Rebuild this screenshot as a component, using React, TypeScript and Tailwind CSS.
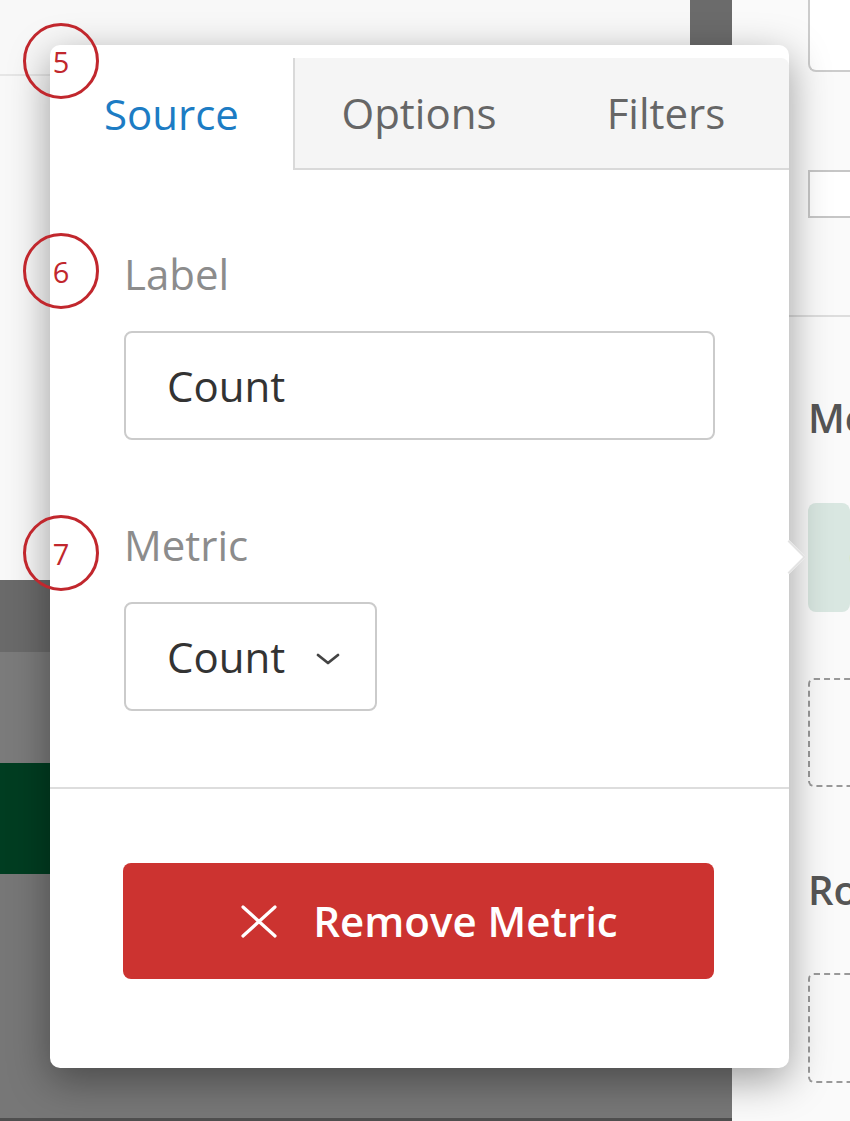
const FONT = "font-['Open_Sans','Noto_Sans',sans-serif]";

function Marker({ n, top }: { n: number; top: string }) {
  return (
    <div
      className={`absolute left-[23px] ${top} flex h-[76px] w-[76px] items-center justify-center rounded-full border-[3px] border-[#c1272d] text-[29px] leading-none text-[#c1272d]`}
    >
      {n}
    </div>
  );
}

function Background() {
  return (
    <div className="flex h-[1121px] w-[850px]">
      <div className="flex w-[732px] flex-col">
        <div className="h-[580px] bg-[#f8f8f8]">
          <div className="flex h-[76px] border-b-2 border-[#e6e6e6]">
            <div className="flex-1" />
            <div className="h-[45px] w-[42px] bg-[#6b6b6b]" />
          </div>
        </div>
        <div className="h-[72px] bg-[#6a6a6a]" />
        <div className="h-[111px] bg-[#7b7b7b]" />
        <div className="h-[111px] bg-[#003d21]" />
        <div className="flex-1 bg-[#777777]" />
        <div className="h-[3px] bg-[#4f4f4f]" />
      </div>

      <div className="flex flex-1 flex-col overflow-hidden bg-[#fafafa]">
        <div className="ml-[76px] h-[72px] rounded-bl-lg border-b-2 border-l-2 border-[#cccccc] bg-white" />
        <div className="ml-[76px] mt-[98px] h-[48px] border-2 border-r-0 border-[#c6c6c6] bg-white" />
        <div className="mt-[97px] border-t-2 border-[#dddddd]" />
        <div className="ml-[76px] mt-[73px] whitespace-nowrap text-[40px] font-semibold leading-[56px] text-[#555555]">
          Measures
        </div>
        <div className="ml-[76px] mt-[57px] flex h-[109px] items-center whitespace-nowrap rounded-lg bg-[#d9e7e1] pl-[40px] text-[38px] text-[#555]">
          Count
        </div>
        <div className="ml-[76px] mt-[66px] h-[109px] rounded-l-md border-2 border-r-0 border-dashed border-[#999999]" />
        <div className="ml-[76px] mt-[75px] whitespace-nowrap text-[40px] font-semibold leading-[56px] text-[#555555]">
          Rows
        </div>
        <div className="ml-[76px] mt-[55px] h-[110px] rounded-l-md border-2 border-r-0 border-dashed border-[#999999]" />
      </div>
    </div>
  );
}

function Tabs() {
  return (
    <div className="mt-[13px] flex h-[112px] text-[42px] leading-[56px]">
      <div className="flex w-[243px] items-center justify-center text-[#1c7cc4]">Source</div>
      <div className="flex w-[250px] items-center justify-center border-b-2 border-l-2 border-[#d9d9d9] bg-[#f5f5f5] text-[#666666]">
        Options
      </div>
      <div className="flex flex-1 items-center justify-center rounded-tr-lg border-b-2 border-[#d9d9d9] bg-[#f5f5f5] text-[#666666]">
        Filters
      </div>
    </div>
  );
}

function Popover() {
  return (
    <div className="absolute left-[50px] top-[45px] flex h-[1023px] w-[739px] flex-col rounded-[10px] bg-white shadow-[0_12px_40px_rgba(0,0,0,0.38)]">
      <div className="absolute left-[727px] top-[500px] h-[24px] w-[24px] rotate-45 border-r-2 border-t-2 border-[#e3e3e3] bg-white" />
      <Tabs />
      <div className="relative flex flex-col px-[74px] pt-[76px]">
        <div className="text-[42px] leading-[56px] text-[#8c8c8c]">Label</div>
        <div className="mt-[29px] flex h-[109px] items-center rounded-lg border-2 border-[#cbcbcb] pl-[41px] text-[42px] leading-[56px] text-[#333333]">
          Count
        </div>
        <div className="mt-[77px] text-[42px] leading-[56px] text-[#8c8c8c]">Metric</div>
        <div className="mt-[29px] flex h-[109px] w-[253px] items-center rounded-lg border-2 border-[#cbcbcb] pl-[41px] text-[42px] leading-[56px] text-[#333333]">
          Count
          <svg className="ml-[30px] mt-[4px]" width="26" height="16" viewBox="0 0 26 16" fill="none">
            <polyline points="3,4 13,12 23,4" stroke="#444" strokeWidth="2.8" strokeLinecap="round" strokeLinejoin="round" />
          </svg>
        </div>
      </div>
      <div className="mt-[76px] border-t-2 border-[#dddddd]" />
      <div className="px-[73px] pt-[74px]">
        <button className="flex h-[116px] w-[591px] items-center justify-center gap-[36px] rounded-lg bg-[#cc3330] pl-[22px] text-[42px] font-semibold leading-[56px] text-white">
          <svg width="36" height="33" viewBox="0 0 36 33" fill="none">
            <path d="M2 2 L34 31 M34 2 L2 31" stroke="white" strokeWidth="3.2" strokeLinecap="round" />
          </svg>
          Remove Metric
        </button>
      </div>
    </div>
  );
}

export default function App() {
  return (
    <div className={`relative h-[1121px] w-[850px] overflow-hidden ${FONT}`}>
      <Background />
      <Popover />
      <Marker n={5} top="top-[23px]" />
      <Marker n={6} top="top-[233px]" />
      <Marker n={7} top="top-[515px]" />
    </div>
  );
}
